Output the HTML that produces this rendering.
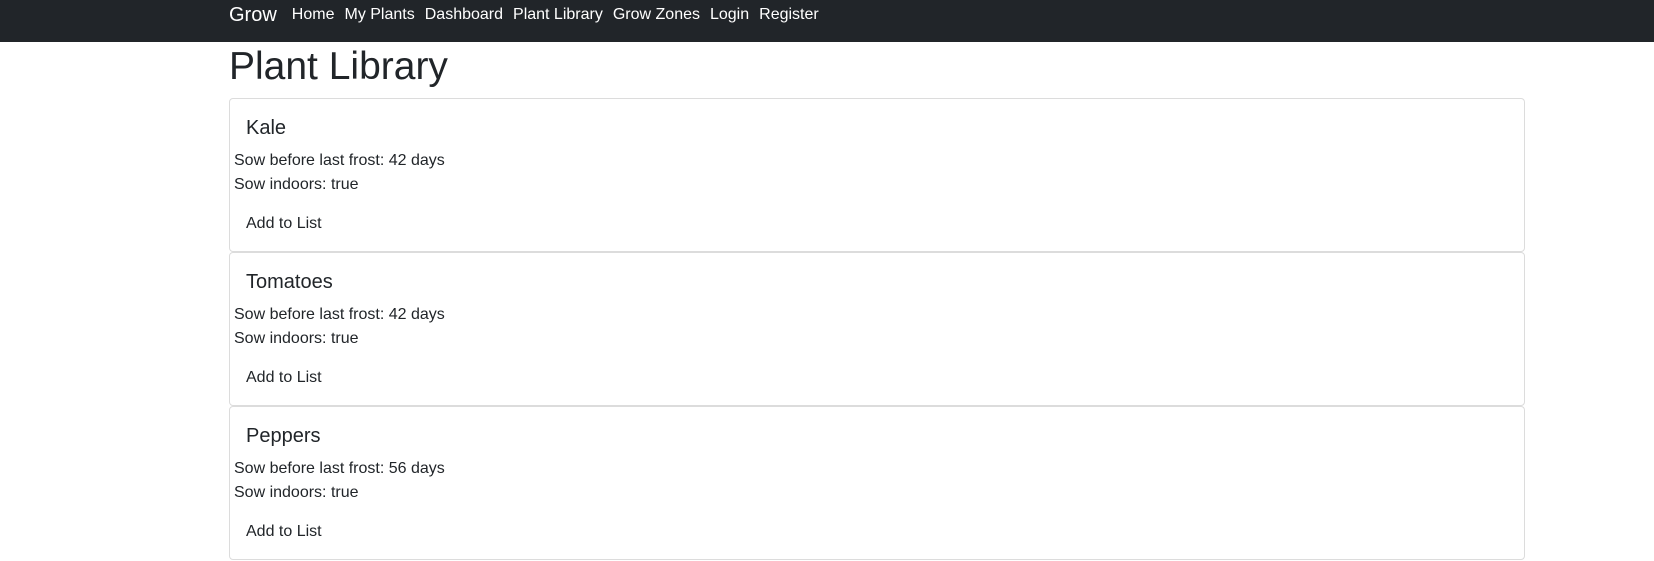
<!DOCTYPE html>
<html><head><style>
body{margin:0;font-family:"Liberation Sans",Arial,sans-serif;color:#212529;background:#fff;font-size:16px;line-height:24px}
.nav{height:42px;background:#212529;position:relative}
.nav .in{position:absolute;left:229px;top:3px;display:flex;align-items:center;color:#fff}
.brand{font-size:20px;margin-right:15px;line-height:24px}
.nav a{color:#fff;margin-right:10px;font-size:16px}
.c{position:absolute;left:229px;top:0;width:1296px}
h1{margin:0;font-size:39px;font-weight:500;line-height:48px;position:absolute;top:43px;left:0}
.card{position:absolute;left:0;width:1294px;height:152px;border:1px solid #dcdcdc;border-radius:4px}
.t{position:absolute;left:16px;top:17px;font-size:20px;font-weight:500;line-height:24px}
.p{position:absolute;left:4px;top:50px}
.btn{position:absolute;left:16px;top:113px}
</style></head><body>
<div class="nav"><div class="in"><span class="brand">Grow</span><a>Home</a><a>My Plants</a><a>Dashboard</a><a>Plant Library</a><a>Grow Zones</a><a>Login</a><a>Register</a></div></div>
<div class="c">
<h1>Plant Library</h1>
<div class="card" style="top:98px"><div class="t">Kale</div><div class="p">Sow before last frost: 42 days<br>Sow indoors: true</div><div class="btn">Add to List</div></div>
<div class="card" style="top:252px"><div class="t">Tomatoes</div><div class="p">Sow before last frost: 42 days<br>Sow indoors: true</div><div class="btn">Add to List</div></div>
<div class="card" style="top:406px"><div class="t">Peppers</div><div class="p">Sow before last frost: 56 days<br>Sow indoors: true</div><div class="btn">Add to List</div></div>
</div>
</body></html>
